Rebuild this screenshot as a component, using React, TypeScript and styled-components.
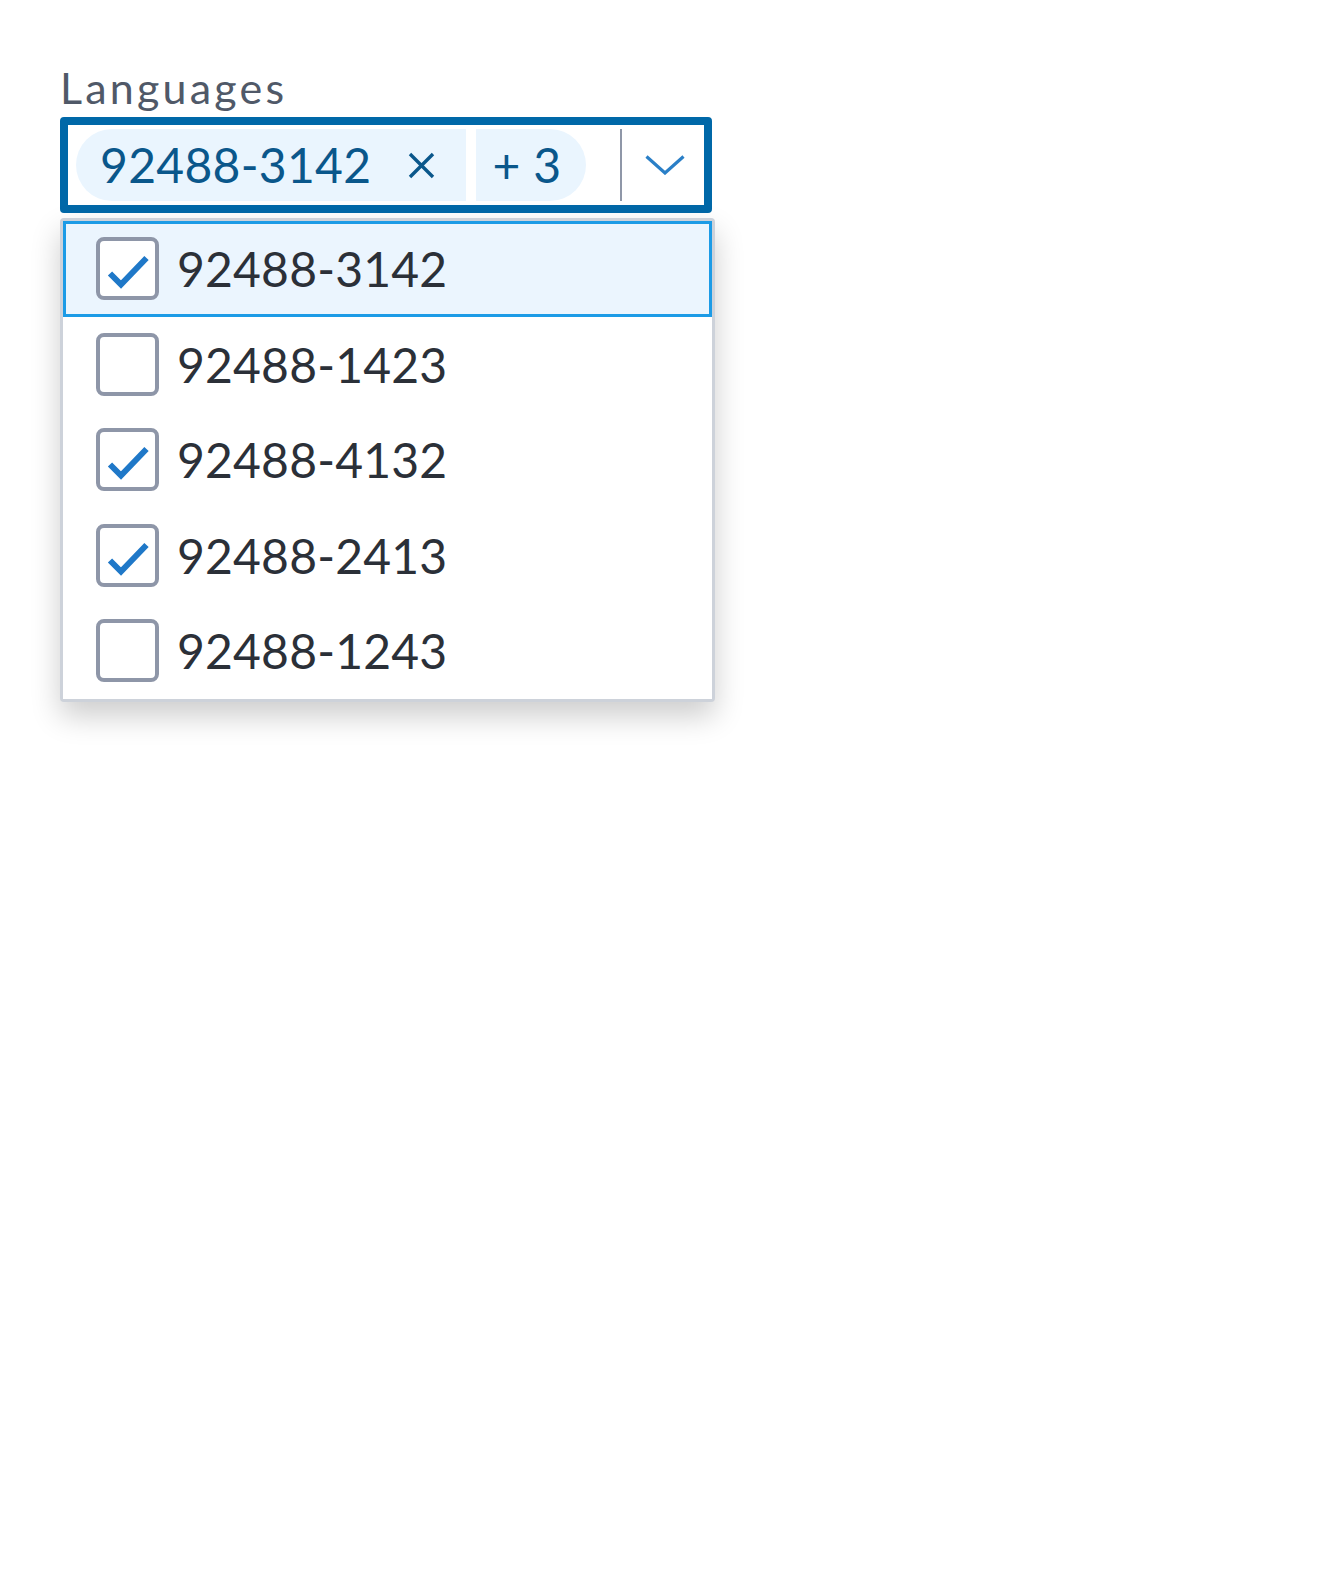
import React, { FC } from 'react'
import styled, { createGlobalStyle } from 'styled-components'

const GlobalStyle = createGlobalStyle`
  html, body {
    margin: 0;
    padding: 0;
    background: #ffffff;
  }
  body {
    font-family: Lato, 'Liberation Sans', sans-serif;
    -webkit-font-smoothing: antialiased;
  }
`

const Page = styled.div`
  display: flex;
  flex-direction: column;
  align-items: flex-start;
  padding: 62px 0 0 60px;
  min-height: 1596px;
  box-sizing: border-box;
`

const FieldLabel = styled.label`
  font-size: 43px;
  line-height: 52px;
  letter-spacing: 3.2px;
  color: #505968;
  margin-bottom: 3px;
`

const Control = styled.div`
  display: flex;
  align-items: center;
  box-sizing: border-box;
  width: 652px;
  height: 96px;
  padding-left: 8px;
  border: 8px solid #0068a8;
  border-radius: 4px;
  background: #ffffff;
`

type ChipProps = { $side: 'left' | 'right' }

const Chip = styled.div<ChipProps>`
  display: flex;
  align-items: center;
  box-sizing: border-box;
  height: 72px;
  background: #eaf5fe;
  color: #0a578b;
  font-size: 48px;
  letter-spacing: 0.3px;
  border-radius: ${({ $side }) => ($side === 'left' ? '36px 0 0 36px' : '0 36px 36px 0')};
  padding: ${({ $side }) => ($side === 'left' ? '0 31px 0 24px' : '0 25px 0 16px')};
  & + & {
    margin-left: 10px;
  }
`

const ChipText = styled.span`
  line-height: 1;
`

const RemoveIcon = styled.svg`
  margin-left: 37px;
  flex: none;
`

const Divider = styled.div`
  width: 2px;
  height: 72px;
  background: #8f97a8;
  margin-left: auto;
`

const Toggle = styled.div`
  width: 82px;
  display: flex;
  justify-content: center;
  padding-left: 4px;
  box-sizing: border-box;
`

const Menu = styled.ul`
  list-style: none;
  margin: 5px 0 0;
  padding: 0;
  width: 655px;
  box-sizing: border-box;
  border: 3px solid #cdd2da;
  border-radius: 4px;
  background: #ffffff;
  box-shadow: 0 14px 30px rgba(0, 0, 0, 0.2);
`

type OptionProps = { $active?: boolean }

const Option = styled.li<OptionProps>`
  display: flex;
  align-items: center;
  box-sizing: border-box;
  height: 95.5px;
  padding-left: 33px;
  gap: 18px;
  font-size: 48px;
  letter-spacing: 0.2px;
  color: #2b3038;
  background: ${({ $active }) => ($active ? '#ebf5fe' : '#ffffff')};
  box-shadow: ${({ $active }) => ($active ? 'inset 0 0 0 3px #1c9be6' : 'none')};
`

const Box = styled.span`
  position: relative;
  flex: none;
  width: 63px;
  height: 63px;
  box-sizing: border-box;
  border: 4px solid #8e96a8;
  border-radius: 8px;
  background: #ffffff;
  svg {
    display: block;
  }
`

const CheckBox: FC<{ checked: boolean }> = ({ checked }) => (
  <Box>
    {checked && (
      <svg width='55' height='55' viewBox='0 0 55 55'>
        <path d='M10 32.5 L21 43.5 L46.5 17' fill='none' stroke='#1f78c8' strokeWidth='6' />
      </svg>
    )}
  </Box>
)

const options = [
  { value: '92488-3142', checked: true },
  { value: '92488-1423', checked: false },
  { value: '92488-4132', checked: true },
  { value: '92488-2413', checked: true },
  { value: '92488-1243', checked: false },
]

const App: FC = () => (
  <>
    <GlobalStyle />
    <Page>
      <FieldLabel>Languages</FieldLabel>
      <Control>
        <Chip $side='left'>
          <ChipText>92488-3142</ChipText>
          <RemoveIcon width='27' height='27' viewBox='0 0 27 27'>
            <path d='M2 2 L25 25 M25 2 L2 25' stroke='#0a578b' strokeWidth='3.4' fill='none' />
          </RemoveIcon>
        </Chip>
        <Chip $side='right'>
          <ChipText>+ 3</ChipText>
        </Chip>
        <Divider />
        <Toggle>
          <svg width='40' height='20' viewBox='0 0 40 20'>
            <path d='M1.5 1.5 L20 18 L38.5 1.5' fill='none' stroke='#2a7fc7' strokeWidth='3.2' />
          </svg>
        </Toggle>
      </Control>
      <Menu>
        {options.map((option, i) => (
          <Option key={option.value} $active={i === 0}>
            <CheckBox checked={option.checked} />
            <span>{option.value}</span>
          </Option>
        ))}
      </Menu>
    </Page>
  </>
)

export default App
